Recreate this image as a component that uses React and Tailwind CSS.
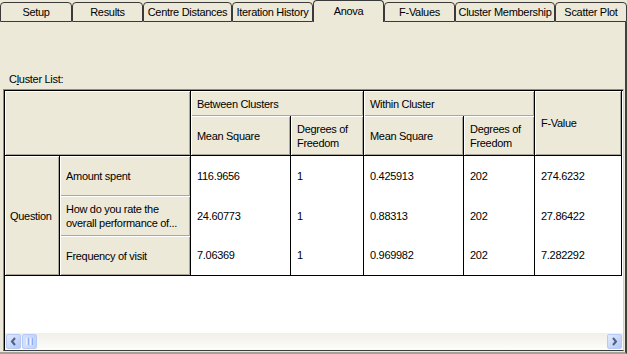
import React from 'react';

const tabs = [
  { label: 'Setup', w: 'w-[72px]' },
  { label: 'Results', w: 'w-[71px]' },
  { label: 'Centre Distances', w: 'w-[89px]' },
  { label: 'Iteration History', w: 'w-[81px]' },
  { label: 'Anova', w: 'w-[71px]', active: true },
  { label: 'F-Values', w: 'w-[71px]' },
  { label: 'Cluster Membership', w: 'w-[100px]' },
  { label: 'Scatter Plot', w: 'w-[72px]' },
];

const rows = [
  { q: ['Amount spent'], v: ['116.9656', '1', '0.425913', '202', '274.6232'] },
  { q: ['How do you rate the', 'overall performance of...'], v: ['24.60773', '1', '0.88313', '202', '27.86422'] },
  { q: ['Frequency of visit'], v: ['7.06369', '1', '0.969982', '202', '7.282292'] },
];

const head = 'bg-[#ECE9D8] border-r border-black shadow-[inset_1px_1px_0_#ffffff,inset_-1px_-1px_0_#ACA899] text-left align-middle font-normal px-[6px] leading-[14px]';

function Arrow({ dir }) {
  return (
    <div className="w-[15px] h-[15px] rounded-[2px] border border-[#B7CAF5] bg-gradient-to-br from-[#E1EAFE] to-[#B4C8F6] flex items-center justify-center">
      <svg width="7" height="9" viewBox="0 0 7 9">
        {dir === 'left' ? (
          <path d="M5 1 L2 4.5 L5 8" stroke="#4D6185" strokeWidth="2" fill="none" />
        ) : (
          <path d="M2 1 L5 4.5 L2 8" stroke="#4D6185" strokeWidth="2" fill="none" />
        )}
      </svg>
    </div>
  );
}

export default function App() {
  return (
    <div className="w-[627px] h-[354px] bg-[#ECE9D8] flex flex-col overflow-hidden text-[11px] tracking-[-0.3px] text-black font-['Liberation_Sans',Arial,sans-serif]">
      {/* Tabs */}
      <div className="flex items-end h-[22px] shrink-0">
        {tabs.map((t) =>
          t.active ? (
            <div key={t.label} className={`${t.w} h-[22px] shrink-0 whitespace-nowrap border-x border-t border-[#3a3a3a] rounded-t-[4px] flex items-center justify-center bg-[#ECE9D8]`}>
              {t.label}
            </div>
          ) : (
            <div key={t.label} className={`${t.w} h-[20px] shrink-0 whitespace-nowrap border border-[#3a3a3a] rounded-t-[4px] flex items-center justify-center bg-[#ECE9D8]`}>
              {t.label}
            </div>
          )
        )}
      </div>

      {/* Panel */}
      <div className="flex-1 flex flex-col border-r-2 border-r-[#404040] border-b-2 border-b-[#A5A197] pt-[51px]">
        <div className="pl-[9px] h-[16px] leading-[13px]">
          C<span className="underline">l</span>uster List:
        </div>

        <div className="ml-[3px] mr-[1px] mb-[1px] flex-1 border-t border-l border-[#8E8B80] border-r border-r-[#D4D0C8] border-b border-b-[#3a3a3a]">
          <div className="h-full border-t-[1.5px] border-l-[1.5px] border-black flex flex-col bg-white">
            <div className="flex-1 overflow-hidden">
              <table className="table-fixed border-separate border-spacing-0 w-[617px]">
                <colgroup>
                  <col className="w-[55px]" />
                  <col className="w-[131px]" />
                  <col className="w-[100px]" />
                  <col className="w-[73px]" />
                  <col className="w-[100px]" />
                  <col className="w-[71px]" />
                  <col className="w-[87px]" />
                </colgroup>
                <thead>
                  <tr>
                    <th colSpan={2} rowSpan={2} className={`${head} border-b`}></th>
                    <th colSpan={2} className={`${head} h-[25px]`}>Between Clusters</th>
                    <th colSpan={2} className={`${head} h-[25px]`}>Within Cluster</th>
                    <th rowSpan={2} className={`${head} border-b`}>F-Value</th>
                  </tr>
                  <tr>
                    <th className={`${head} h-[40px] border-b`}>Mean Square</th>
                    <th className={`${head} h-[40px] border-b`}>Degrees of<br />Freedom</th>
                    <th className={`${head} h-[40px] border-b`}>Mean Square</th>
                    <th className={`${head} h-[40px] border-b`}>Degrees of<br />Freedom</th>
                  </tr>
                </thead>
                <tbody>
                  {rows.map((r, i) => (
                    <tr key={r.q[0]}>
                      {i === 0 && (
                        <td rowSpan={3} className={`${head} border-b pl-[5px]`}>Question</td>
                      )}
                      <td className={`${head} h-[40px] whitespace-nowrap ${i === 2 ? 'border-b' : ''}`}>
                        {r.q.map((line, k) => (
                          <div key={k}>{line}</div>
                        ))}
                      </td>
                      {r.v.map((v, j) => (
                        <td key={j} className={`border-r border-black px-[6px] align-middle ${i === 2 ? 'border-b' : ''}`}>
                          {v}
                        </td>
                      ))}
                    </tr>
                  ))}
                </tbody>
              </table>
            </div>

            {/* Scrollbar */}
            <div className="h-[17px] shrink-0 flex items-center gap-[1px] px-[1px] bg-gradient-to-b from-[#F0EFE8] to-[#FDFDFA]">
              <Arrow dir="left" />
              <div className="w-[15px] h-[15px] rounded-[2px] border border-[#B7CAF5] bg-gradient-to-r from-[#D4E0FD] to-[#C1D2FB] flex items-center justify-center gap-[1px]">
                <span className="w-px h-[7px] bg-[#EEF3FF]" />
                <span className="w-px h-[7px] bg-[#8CB0F8]" />
                <span className="w-px h-[7px] bg-[#EEF3FF]" />
                <span className="w-px h-[7px] bg-[#8CB0F8]" />
              </div>
              <div className="flex-1" />
              <Arrow dir="right" />
            </div>
          </div>
        </div>
      </div>
    </div>
  );
}
